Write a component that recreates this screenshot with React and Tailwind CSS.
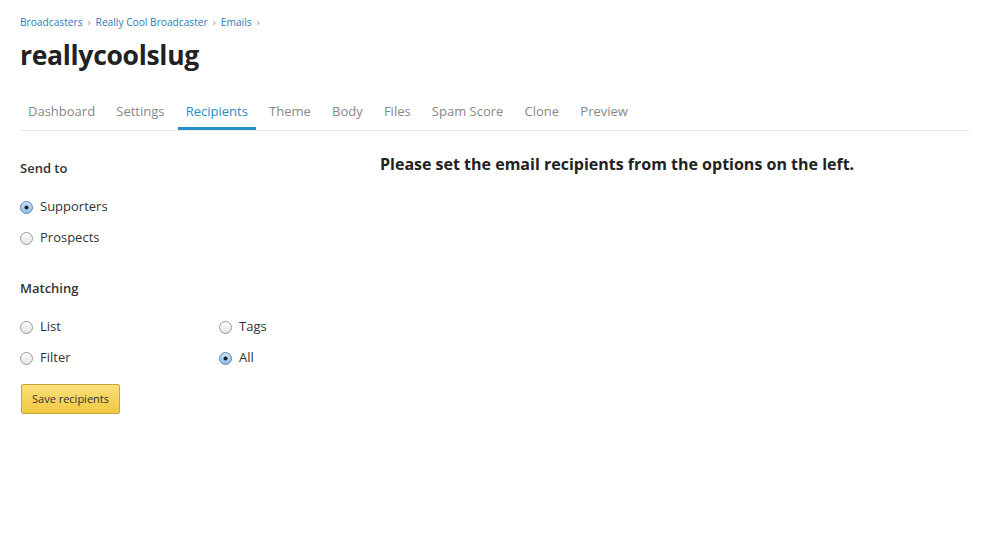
import React from "react";

function Radio({ checked }) {
  return (
    <svg width="13" height="13" viewBox="0 0 13 13" className="shrink-0">
      <defs>
        <linearGradient id={checked ? "rc" : "ru"} x1="0" y1="0" x2="0" y2="1">
          {checked ? (
            <>
              <stop offset="0" stopColor="#cfe3f7" />
              <stop offset="1" stopColor="#8fbbe8" />
            </>
          ) : (
            <>
              <stop offset="0" stopColor="#ffffff" />
              <stop offset="1" stopColor="#e3e3e3" />
            </>
          )}
        </linearGradient>
      </defs>
      <circle cx="6.5" cy="6.5" r="6" fill={`url(#${checked ? "rc" : "ru"})`} stroke={checked ? "#5a86b5" : "#9a9a9a"} strokeWidth="1" />
      {checked && <circle cx="6.5" cy="6.5" r="2" fill="#1a1a1a" />}
    </svg>
  );
}

function Option({ label, checked }) {
  return (
    <label className="flex items-center gap-[7px] h-[20px] text-[13px] text-[#333]">
      <Radio checked={checked} />
      <span>{label}</span>
    </label>
  );
}

const tabs = ["Dashboard", "Settings", "Recipients", "Theme", "Body", "Files", "Spam Score", "Clone", "Preview"];

export default function App() {
  return (
    <div className="w-[989px] h-[533px] bg-white px-5 pt-[15px]" style={{ fontFamily: '"Open Sans", "Noto Sans", sans-serif' }}>
      <div className="flex items-center gap-[5px] text-[10.2px] text-[#2b7bb9] h-[16px]">
        <span>Broadcasters</span>
        <span className="text-[#999]">›</span>
        <span>Really Cool Broadcaster</span>
        <span className="text-[#999]">›</span>
        <span>Emails</span>
        <span className="text-[#999]">›</span>
      </div>
      <h1 className="mt-[6px] text-[26.5px] leading-[36px] font-bold text-[#222] tracking-[-0.3px]">reallycoolslug</h1>
      <div className="mt-[28px] flex gap-[5.2px] border-b border-[#e8e8e8] w-[950px]">
        {tabs.map((t) => (
          <div
            key={t}
            className={
              "px-2 h-[29px] flex items-start text-[13px] leading-[20px] " +
              (t === "Recipients" ? "text-[#2590c8] border-b-[3px] border-[#2590c8] -mb-[1px]" : "text-[#888]")
            }
          >
            {t}
          </div>
        ))}
      </div>
      <div className="flex mt-[27px]">
        <div className="w-[360px]">
          <div className="text-[13px] font-semibold text-[#333] leading-[20px]">Send to</div>
          <div className="mt-[19px] flex flex-col gap-[11px]">
            <Option label="Supporters" checked />
            <Option label="Prospects" />
          </div>
          <div className="mt-[30px] text-[13px] font-semibold text-[#333] leading-[20px]">Matching</div>
          <div className="mt-[19px] grid grid-cols-[199px_1fr] gap-y-[11px]">
            <Option label="List" />
            <Option label="Tags" />
            <Option label="Filter" />
            <Option label="All" checked />
          </div>
          <button className="mt-[16px] ml-px h-[30px] w-[99px] rounded-[2px] border border-[#c8a53c] bg-gradient-to-b from-[#fae07a] to-[#f0c83f] text-[11px] text-[#333]">
            Save recipients
          </button>
        </div>
        <div className="flex-1 text-[16px] font-bold text-[#222] leading-[20px] -mt-[4px]">
          Please set the email recipients from the options on the left.
        </div>
      </div>
    </div>
  );
}
